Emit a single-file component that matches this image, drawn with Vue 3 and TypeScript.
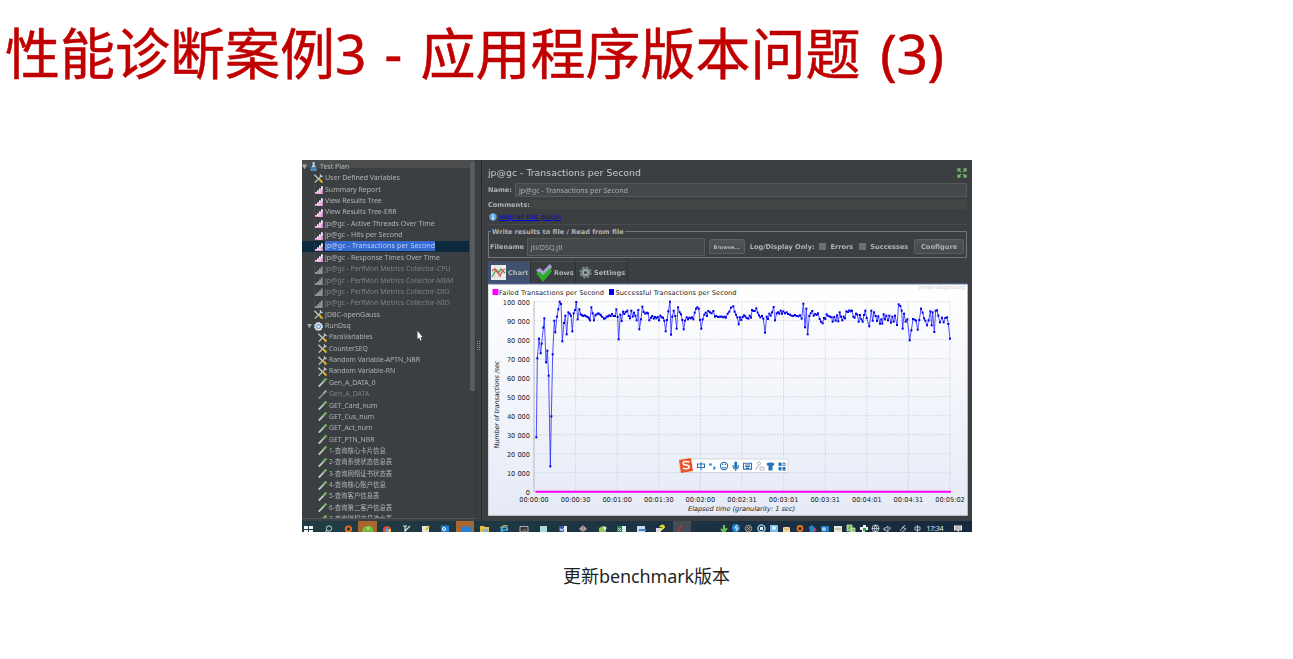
<script setup lang="ts">
interface TreeNode { label: string; level: number; icon: string; open?: boolean; dim?: boolean; selected?: boolean; cjk?: boolean }
const node = (label: string, level: number, icon: string, extra: Partial<TreeNode> = {}): TreeNode => ({ label, level, icon, ...extra })

const tree: TreeNode[] = [
  node('Test Plan', 0, 'flask', { open: true }),
  node('User Defined Variables', 1, 'tools'),
  ...['Summary Report', 'View Results Tree', 'View Results Tree-ERR', 'jp@gc - Active Threads Over Time', 'jp@gc - Hits per Second'].map(t => node(t, 1, 'graph')),
  node('jp@gc - Transactions per Second', 1, 'graph', { selected: true }),
  node('jp@gc - Response Times Over Time', 1, 'graph'),
  ...['CPU', 'MEM', 'DIO', 'NIO'].map(t => node('jp@gc - PerfMon Metrics Collector-' + t, 1, 'graph', { dim: true })),
  node('JDBC-openGauss', 1, 'tools'),
  node('RunDsq', 1, 'gear', { open: true }),
  ...['ParaVariables', 'CounterSEQ', 'Random Variable-APTN_NBR', 'Random Variable-RN'].map(t => node(t, 2, 'tools')),
  node('Gen_A_DATA_0', 2, 'pipette'),
  node('Gen_A_DATA', 2, 'pipette', { dim: true }),
  ...['GET_Card_num', 'GET_Cus_num', 'GET_Act_num', 'GET_PTN_NBR'].map(t => node(t, 2, 'pipette')),
  ...['1-查询核心卡片信息', '2-查询系统状态信息表', '3-查询网络证书状态表', '4-查询核心账户信息', '5-查询客户信息表', '6-查询第二客户信息表', '7-查询授权交易流水表'].map(t => node(t, 2, 'pipette', { cjk: true })),
]

// Samples as "x,y" pairs, three units to the pixel
const early = '169,472 172,235 177,176 182,220 185,191 190,143 193,115 198,247 202,212 206,287 211,559 214,409 218,223 223,122 226,157 231,110 235,88 239,65 243,72 247,184 252,129 256,107 260,163 265,97 269,101 273,107 277,154 281,100 285,90 289,66 293,118 298,88 302,103 306,106 310,108 314,106 319,109 323,111 327,115 330,121 334,82 338,100 342,121 346,106 350,103 355,100 359,103 363,106 367,111 372,116 376,115 380,110 384,109 388,106 392,108 396,102 401,108 405,108 409,88 413,111 416,178 421,104 425,123 429,95 433,102 437,96 442,92 446,108 450,115 454,92 458,110 462,98 466,107 470,121 475,90 478,148 483,118 487,80 491,96 496,101 500,98 504,100 508,121 513,113 517,108 521,116 525,111 529,115 533,111 537,121 541,107 545,112 549,113 553,122 557,154 561,120 565,94 570,65 573,164 577,110 581,92 586,108 590,146 594,82 599,97 603,103 607,120 611,148 615,122 620,112 624,118 628,113 632,115 636,112 640,118 644,98 648,86 652,82 656,86 660,120 664,146 668,118 673,104 677,98 681,108 685,93 690,97 695,100 700,93 705,110 709,108 714,111'
const late = '0,110 5,110 10,112 14,110 18,113 23,101 28,95 33,83 40,79 44,95 48,104 52,112 56,133 60,112 64,120 68,111 72,106 76,109 80,114 85,116 89,107 93,113 96,90 100,93 104,93 109,85 113,98 117,106 121,112 126,108 130,116 135,158 140,110 144,117 148,101 152,107 156,97 161,81 165,121 170,100 174,97 178,101 182,92 186,101 190,94 195,100 200,97 204,102 210,104 215,107 220,108 225,105 230,108 235,109 240,106 245,116 250,71 255,142 259,86 263,163 268,108 272,100 277,93 281,107 286,102 290,105 294,100 299,117 303,125 308,130 312,114 316,117 320,103 325,108 330,110 335,112 338,125 343,111 347,122 351,106 355,124 359,97 363,110 367,121 371,110 375,115 379,94 384,96 388,91 392,94 396,92 400,110 404,113 408,101 412,104 416,125 420,105 424,118 428,125 432,105 436,92 440,114 448,139 454,92 458,122 462,97 467,108 471,123 475,109 480,131 484,118 487,131 491,103 495,118 499,107 504,121 508,107 513,128 517,110 521,125 525,107 531,135 536,73 541,78 545,92 548,146 552,101 557,125 562,118 569,181 574,151 579,117 584,119 588,122 593,149 598,120 603,86 608,98 612,115 616,122 621,136 626,121 631,94 635,136 638,97 643,156 647,92 651,91 655,107 660,127 666,113 671,127 676,114 681,112 685,132 690,176'
const parse = (s: string, dx: number) => s.split(' ').map(p => p.split(',').map(Number)).map(([x, y]) => [(x + dx) / 3 - 8, y / 3 - 4])
const samples = [...parse(early, 0), ...parse(late, 720)]
const line = samples.map(p => p.map(n => n.toFixed(2)).join(',')).join(' ')

const yTicks = Array.from({ length: 11 }, (_, i) => ({ y: 207.7 - i * 19, label: i === 0 ? '0' : `${i * 10} 000` }))
const xTicks = ['00:00:00', '00:00:30', '00:01:00', '00:01:30', '00:02:00', '00:02:31', '00:03:01', '00:03:31', '00:04:01', '00:04:31', '00:05:02'].map((label, i) => ({ x: 46 + i * 41.6, label }))
</script>

<template>
  <main class="slide">
    <h1 class="title"><span>性能诊断案例</span><span class="lat a">3 - </span><span>应用程序版本问题</span><span class="lat b"> (3)</span></h1>
    <section class="shot">
      <div class="workspace">
        <aside class="tree">
          <div v-for="n in tree" :key="n.label" class="row" :class="['l' + n.level, { dim: n.dim, selected: n.selected, cjk: n.cjk }]">
            <i class="arrow" :class="{ open: n.open }"></i>
            <svg class="ico" viewBox="0 0 9 9">
              <g v-if="n.icon === 'flask'"><path d="M3.6 0h2v3l2 4.500q0 1.300-1.200 1.300H2.700q-1.300 0-1.100-1.300l2-4.500z" fill="#b8d4e8" /><path d="M2.500 5h4l1.100 2.600q0 1.200-1.200 1.200H2.700q-1.300 0-1.100-1.200z" fill="#3d86c6" /></g>
              <g v-else-if="n.icon === 'tools'" fill="none"><path d="M.8 8.600L7.500 1.600" stroke="#c4c8ca" stroke-width="1.3" /><path d="M.4.8l3.800 3.700M6.300.4l.4 1.900 2 .2" stroke="#c4c8ca" stroke-width="1.3" /><path d="M4.900 4.800l3.500 3.800" stroke="#e3b320" stroke-width="2" /></g>
              <g v-else-if="n.icon === 'graph'"><path d="M.2 0v9" stroke="#6b6e70" stroke-width=".4" /><path v-if="n.dim" d="M1 9V7h2V5.500h2v-2h2V1.500h1.700V9z" fill="#8f9192" /><g v-else><path d="M1 9V7h2V5.500h2v-2h2V1.500h1.700V9z" fill="#ecb9e6" /><path d="M3 5.500h1.200V8H3zM5 3.500h1.200V6H5zM7 1.500h1.700v3H7z" fill="#e2ecff" /><path d="M1 8.200h4V9H1zM7.300 5.500h1.400V9H7.300z" fill="#e08acf" /></g></g>
              <g v-else-if="n.icon === 'gear'"><circle cx="4.5" cy="4.5" r="3.7" fill="#d7e5f0" stroke="#d7e5f0" stroke-width="1.4" stroke-dasharray="1.5 .9" /><circle cx="4.5" cy="4.5" r="2" fill="none" stroke="#5285b5" stroke-width="1" /></g>
              <g v-else><path d="M.8 8.600L6.500 2.500" :stroke="n.dim ? '#888' : '#c7cbc9'" stroke-width="1.8" /><path d="M5.200 3.700L8.400.5" :stroke="n.dim ? '#999' : '#70b75d'" stroke-width="2.2" /></g>
            </svg>
            <span>{{ n.label }}</span>
          </div>
          <i class="thumb"></i>
        </aside>
        <div class="split"><i></i></div>
        <div class="panel">
          <header class="head"><span>jp@gc - Transactions per Second</span>
            <svg width="10" height="10" viewBox="0 0 10 10" stroke="#6fbf62" stroke-width="1.3" fill="none"><path d="M1 3.500V1h2.500M1 1l3 3M6.500 1H9v2.500M9 1L6 4M1 6.500V9h2.500M1 9l3-3M6.500 9H9V6.500M9 9L6 6" /></svg>
          </header>
          <div class="name"><b>Name:</b><div class="input">jp@gc - Transactions per Second</div></div>
          <div class="comments"><b>Comments:</b><div></div></div>
          <div class="help"><svg width="8" height="8" viewBox="0 0 8 8"><circle cx="4" cy="4" r="3.7" fill="#65a3da" /><path d="M4 1.500v1M4 3.400v3" stroke="#fff" stroke-width="1.3" /></svg><span>Help on this plugin</span></div>
          <div class="file">
            <b class="legend">Write results to file / Read from file</b>
            <b class="fn">Filename</b><div class="input">jtl/DSQ.jtl</div><div class="btn browse">Browse...</div>
            <b class="log">Log/Display Only:</b><i></i><b class="err">Errors</b><i></i><b class="suc">Successes</b><div class="btn conf">Configure</div>
          </div>
          <nav class="tabs">
            <div class="tab active"><svg width="15" height="15" viewBox="0 0 15 15"><path d="M0 0h15v15H0z" fill="#eee" /><path d="M0 4h15M0 8h15M0 12h15M4 0v15M9 0v15" stroke="#ccc" stroke-width=".5" /><path d="M1 12l4-7 3 2 2-3 4 4" stroke="#4ba34a" fill="none" stroke-width="1.3" /><path d="M1 6l3-2 5 7 3-6 2-1" stroke="#dc5048" fill="none" stroke-width="1.3" /></svg><b>Chart</b></div>
            <div class="tab rows"><svg width="18" height="18" viewBox="0 0 18 18"><path d="M1 6l4-2 3 3 7-7 2 3-9 12z" fill="#a7a4da" /><path d="M1 9l4-1 3 3 7-7 2 3-9 11z" fill="#2cae27" /></svg><b>Rows</b></div>
            <div class="tab set"><svg width="13" height="13" viewBox="0 0 13 13"><circle cx="6.5" cy="6.5" r="5" fill="#728080" stroke="#728080" stroke-width="2.4" stroke-dasharray="2 1.93" /><circle cx="6.5" cy="6.5" r="3" fill="#a2b0b0" /><circle cx="6.5" cy="6.5" r="1.6" fill="#3c4244" /></svg><b>Settings</b></div>
          </nav>
          <svg class="chart" width="480" height="232" viewBox="0 0 480 232">
            <defs><linearGradient id="sky" x1="0" y1="0" x2="0" y2="1"><stop offset="0" stop-color="#fff" /><stop offset="1" stop-color="#e5eaf6" /></linearGradient></defs>
            <rect width="479" height="232" fill="url(#sky)" />
            <path d="M0 232V.5h479.500v231H0" fill="none" stroke="#b9bdc0" />
            <g stroke="#c3c6ce" stroke-width=".7" stroke-dasharray="1.5 1.5">
              <path v-for="t in yTicks" :key="t.label" :d="`M46 ${t.y}H462`" />
              <path v-for="t in xTicks" :key="t.label" :d="`M${t.x} 17.7V207.7`" />
            </g>
            <path d="M46 17.500V208" stroke="#aaa" stroke-width=".6" />
            <path d="M4.500 5h6v6h-6z" fill="#f0f" /><path d="M121 5h5v6h-5z" fill="#00f" />
            <g class="ct">
              <text x="11" y="10.5" textLength="105">Failed Transactions per Second</text>
              <text x="127.5" y="10.5" textLength="121">Successful Transactions per Second</text>
              <text v-for="t in yTicks" :key="t.label" x="42" :y="t.y + 2.8" text-anchor="end">{{ t.label }}</text>
              <text v-for="t in xTicks" :key="t.label" :x="t.x" y="217.8" text-anchor="middle">{{ t.label }}</text>
              <text class="it" x="200" y="226.5" textLength="107">Elapsed time (granularity: 1 sec)</text>
              <text class="it" transform="translate(10.5 164.5) rotate(-90)" textLength="88">Number of transactions /sec</text>
              <text class="wm" x="430" y="5" textLength="47">jmeter-plugins.org</text>
            </g>
            <polyline :points="line" fill="none" stroke="#3030ff" stroke-width=".85" />
            <rect v-for="(p, i) in samples" :key="i" :x="p[0] - 1" :y="p[1] - 1" width="2" height="2" fill="#0000e8" />
            <path d="M47.500 207.700H463" stroke="#f0f" stroke-width="2" />
            <g>
              <rect x="192" y="175" width="108" height="13.5" fill="#fff" stroke="#c8ccd5" stroke-width=".7" />
              <path d="M191 176l12-2 2 13-12 2z" fill="#ed5528" />
              <path d="M201.500 178q-6-1.500-6.500 1 0 1.800 3 2t3.200 2.200q-.8 2.600-6.200 1" stroke="#fff" stroke-width="1.5" fill="none" />
              <g stroke="#2673b8" fill="none" stroke-width="1.1">
                <path d="M209.500 180h7v3.500h-7zM213 178v8.500" /><circle cx="222.5" cy="180.5" r=".8" /><path d="M226.500 182.500v1.500l-1 1.500" stroke-width="1.5" />
                <circle cx="236" cy="182" r="3.600" /><path d="M234 180.500h1.300M236.700 180.500h1.300M234 183q2 2 4 0" stroke-width=".9" />
                <path d="M245 181q0 4 2.700 4t2.700-4M247.700 185v2" /><path d="M247.700 179v4" stroke-width="2.8" stroke-linecap="round" />
                <path d="M255.500 179.300h8v5.800h-8zM257 181h5M257 182.500h5M258 184h3" />
              </g>
              <g stroke="#b5b9c3" fill="none"><circle cx="271" cy="179.5" r="1.5" /><path d="M268 186q0-4 3-4M272 183h4v3h-4z" /></g>
              <path d="M278.500 179.500l2.500-1h3l2.500 1-1 2.500-1-.5v5h-4v-5l-1 .5zM290.500 178.500h3v3.500h-3zM290.500 183h3v3.500h-3zM294.500 183h3v3.500h-3z" fill="#2673b8" /><circle cx="296" cy="180.3" r="1.4" fill="none" stroke="#2673b8" />
            </g>
          </svg>
        </div>
      </div>
      <svg class="taskbar" width="670" height="11" viewBox="0 0 670 11">
        <defs><linearGradient id="bar"><stop offset="0" stop-color="#203c43" /><stop offset=".6" stop-color="#1c3244" /><stop offset="1" stop-color="#17293c" /></linearGradient></defs>
        <path d="M0 0h670v11H0z" fill="url(#bar)" />
        <path d="M56 0h19v11H56zM154 0h18v11h-18z" fill="#a9662f" /><path d="M371 0h18v11h-18z" fill="#454c55" />
        <path d="M2 5h4v3H2zM7 5h4v3H7zM2 9h4v2H2zM7 9h4v2H7z" fill="#f4f8f8" />
        <g fill="none" stroke="#c8d4d5" stroke-width="1"><circle cx="27" cy="7.5" r="2.7" /><path d="M25 9.500L23 11" /></g>
        <circle cx="46.5" cy="8" r="2.7" fill="none" stroke="#ee701f" stroke-width="1.8" />
        <path d="M61 7q2-3 4-1 3-3 6 1v4H60z" fill="#73bb42" /><circle cx="66" cy="7" r="1.5" fill="#b3df6b" />
        <path d="M81 9q0-4 4-4t4 4v2h-8z" fill="#d94a38" /><path d="M85 8h4v3h-4z" fill="#eabd35" /><circle cx="85" cy="9" r="1.8" fill="#519ef0" />
        <path d="M101 5h4M103 5v6M103 10l5-5" stroke="#dae2d7" stroke-width="1.2" />
        <path d="M120 5h7v6h-7z" fill="#dceadf" /><path d="M124 9l3-4" stroke="#eeb72e" stroke-width="2" />
        <path d="M139 4.500h8V11h-8z" fill="#2682cd" /><circle cx="142" cy="8" r="1.5" fill="none" stroke="#fff" />
        <path d="M159 7l3-2 3 1 3-1 2 2-1 4h-9z" fill="#277ed6" />
        <path d="M178 5h4l1 1h4v5h-9z" fill="#e7bd4b" /><path d="M181 8h5v3h-5z" fill="#72bade" />
        <path d="M198.500 9h7q0-3-3-3t-3 3 2 2" fill="none" stroke="#3db0ee" stroke-width="1.5" /><path d="M198 7q4-4 8-2" fill="none" stroke="#e5c743" />
        <path d="M218 5.500h8V11h-8z" fill="#30383d" stroke="#ccc" stroke-width=".8" /><path d="M221 9h3" stroke="#de6460" />
        <path d="M238 5h7v6h-7z" fill="#a9dcd5" /><path d="M257 5h8v6h-8z" fill="#e4eaf6" /><path d="M257 5h5v6h-5z" fill="#305ea5" /><path d="M258 7l1 3 .8-2 .8 2 1-3" fill="none" stroke="#fff" stroke-width=".6" />
        <path d="M281 4l4 4-4 3-4-3z" fill="#a9a9b6" /><path d="M281 5v5" stroke="#d74f45" stroke-width="1.2" />
        <path d="M297 7l4-2 3 1v5h-7z" fill="#8fcd4e" /><circle cx="303" cy="7" r="1.5" fill="#eee" />
        <path d="M315 5h9v6h-9z" fill="#d9eee2" /><path d="M315 5h5v6h-5z" fill="#278350" /><path d="M316 7l3 3m0-3l-3 3" stroke="#fff" stroke-width=".7" />
        <path d="M335 5h8v6h-8z" fill="#c8daf1" /><path d="M337 9h7" stroke="#4187cb" stroke-width="2" />
        <path d="M354 7h5v4h-5z" fill="#d5dde2" /><path d="M358 6q3-3 4 0-2 2-3 3" fill="none" stroke="#f4de31" stroke-width="2" />
        <path d="M376 10l4-6" stroke="#c42f38" stroke-width="1.4" />
        <path d="M422 4v5M419 8l3 3 3-4" stroke="#73c44e" stroke-width="2" fill="none" /><circle cx="434" cy="7" r="4" fill="#2786d0" /><path d="M435 4l-2 3h3l-2 3" stroke="#fff" fill="none" />
        <circle cx="446.5" cy="7.5" r="3.2" fill="#444" stroke="#999" /><path d="M445 6l3 3m0-3l-3 3" stroke="#999" /><circle cx="459.5" cy="7.5" r="3.5" fill="none" stroke="#8bc5e7" stroke-width="1.6" /><path d="M458 6h3v3h-3z" fill="#eee" />
        <path d="M468 4h8v7h-8z" fill="#79bfe8" /><circle cx="472" cy="7" r="2" fill="#e2f4ff" /><path d="M481 6h7v5h-7z" fill="#f3dfa6" /><path d="M481 6l3.500 3L488 6" fill="none" stroke="#d78d41" />
        <circle cx="498" cy="7.5" r="2.5" fill="#38210e" stroke="#df7226" stroke-width="1.8" /><path d="M507 6l3-2 4 4-2 3h-4z" fill="#2883d1" /><circle cx="513" cy="9" r="1.5" fill="#d4393b" />
        <path d="M519 5h8v6h-8z" fill="#2481cb" /><circle cx="522" cy="8" r="1.3" fill="none" stroke="#fff" /><path d="M532 5h8v6h-8z" fill="#e9e8dd" /><path d="M533 8h6" stroke="#a99f77" />
        <path d="M545 4h5v6h-5zM549 7h4v4h-4z" fill="#7dbc55" stroke="#eef6df" stroke-width=".7" /><path d="M558 6h3V4h3v2h2v3h-3v2h-3V9h-2z" fill="#e9f4ea" /><path d="M561 7h3v3h-3z" fill="#32a65d" />
        <g fill="none" stroke="#d7e1e6" stroke-width=".8"><circle cx="573.5" cy="7.5" r="3.5" /><path d="M570 7.500h7M573.500 4q-3 3.500 0 7M573.500 4q3 3.500 0 7M582 7h2l2-2v6l-2-2h-2zM588 6v3" /><path d="M598 10l5-6M600 6l4 2-4 3" /><path d="M613 6h5v3h-5zM615.500 4v7" /></g>
        <text x="624.5" y="10.2" textLength="17">17:34</text>
        <path d="M652 4.500h8v5h-3V11l-2-1.500h-3z" fill="#eee" /><path d="M653 6h6M653 8h6" stroke="#46515b" stroke-width=".6" />
      </svg>
      <svg class="cursor" width="6" height="10" viewBox="0 0 6 10"><path d="M.5 0v8l1.700-1.500L3.300 9.500l1.200-.5-1.100-2.700H5.700z" fill="#fff" /></svg>
    </section>
    <p class="caption">更新<span>benchmark</span>版本</p>
  </main>
</template>

<style scoped>
.slide { width: 1293px; height: 659px; background: #fff; overflow: hidden; display: flex; flex-direction: column; align-items: center; font-family: "DejaVu Sans", "Noto Sans CJK SC", sans-serif; }
.title { align-self: flex-start; margin: 8px 0 0 5px; height: 84px; font: 400 55px/84px "Noto Sans CJK SC", sans-serif; color: #c00000; white-space: pre; -webkit-text-stroke: .5px #c00000; }
.lat { font-family: "Noto Sans", sans-serif; }
.lat.a { letter-spacing: 1.9px; }
.lat.b { word-spacing: 6px; letter-spacing: -.4px; }
.shot { position: relative; align-self: flex-start; width: 670px; height: 372px; margin: 68px 0 0 302px; background: #3c3f41; overflow: hidden; font-size: 6.6px; color: #b0b3b4; }
.workspace { display: flex; height: 361px; overflow: hidden; filter: blur(.25px); }
.tree { position: relative; flex: none; width: 173px; height: 359px; overflow: hidden; padding-top: 1.3px; box-sizing: border-box; background: linear-gradient(#4b4d4f 0 8px, transparent 8px); border-bottom: 1px solid #55595b; }
.row { display: flex; align-items: center; height: 11.37px; gap: 2px; white-space: nowrap; font-family: "Noto Sans", "Noto Sans CJK SC", sans-serif; font-size: 7px; box-sizing: border-box; }
.row span { line-height: 10px; }
.l1 { padding-left: 5px; }
.l2 { padding-left: 9px; font-size: 6.8px; }
.cjk { font-size: 6.4px; }
.dim { color: #7e8182; font-size: 6.9px; }
.selected { background: #0d293e; color: #bdd0f5; width: 167px; letter-spacing: .13px; }
.selected span { background: #3569cf; }
.arrow { width: 5px; height: 5px; flex: none; }
.arrow.open { background: #a6a9aa; clip-path: polygon(0 0, 100% 0, 50% 100%); }
.ico { width: 9px; height: 9px; flex: none; }
.thumb { position: absolute; right: 0; top: 2px; width: 5px; height: 229px; background: #595c5e; }
.split { flex: none; width: 7px; border-right: 1px solid #25282a; box-sizing: border-box; border-left: 1px solid #33373a; display: flex; align-items: center; justify-content: center; }
.split i { width: 3px; height: 9px; border: dotted #8d9091; border-width: 0 1px; box-sizing: border-box; margin-top: 10px; }
.panel { width: 490px; padding: 0 5px 0 6px; box-sizing: border-box; }
.head { height: 23px; padding-top: 2px; box-sizing: border-box; display: flex; align-items: center; justify-content: space-between; font-size: 9.4px; color: #c5c8c9; }
.name { display: flex; align-items: center; height: 14px; }
.name b { width: 27px; }
.input { flex: 1; height: 100%; box-sizing: border-box; border: 1px solid #56595a; background: #45484a; padding-left: 3px; display: flex; align-items: center; color: #aaa; font-family: "Noto Sans", sans-serif; font-size: 7.2px; }
.comments { display: flex; align-items: center; height: 9px; margin-top: 3px; }
.comments b { width: 42px; }
.comments div { flex: 1; height: 9px; background: #434647; }
.help { height: 16px; display: flex; align-items: center; gap: 2px; border-bottom: 1px solid #484b4d; color: #0000e8; box-sizing: border-box; padding-left: 1px; }
.help span { text-decoration: underline; }
.file { position: relative; margin-top: 6px; height: 27px; border: 1px solid #75787a; box-sizing: border-box; display: flex; align-items: center; padding: 4px 2px 0 1px; white-space: nowrap; }
.legend { position: absolute; left: 2px; top: -4px; line-height: 8px; background: #3c3f41; padding: 0 1px; }
.fn { width: 37px; }
.file .input { flex: none; width: 178px; height: 18px; }
.btn { box-sizing: border-box; border-radius: 2px; border: 1px solid #5c6062; background: linear-gradient(#515557, #45494b); display: flex; align-items: center; justify-content: center; height: 15px; font-weight: 700; }
.browse { width: 36px; margin: 0 5px 0 4px; font-size: 5px; }
.log { width: 70px; }
.file i { width: 7px; height: 7px; background: #6b6e6f; margin-right: 4px; }
.err { width: 29px; }
.suc { width: 44px; }
.conf { width: 50px; }
.tabs { display: flex; height: 24px; margin-top: 2px; border-bottom: 1px solid #4a5f91; padding-top: 1px; box-sizing: border-box; }
.tab { display: flex; align-items: center; box-sizing: border-box; border-right: 1px solid #2f3234; border-top: 1px solid #4c4f51; }
.tab.active { width: 43px; background: #40506f; padding-left: 3px; gap: 2px; }
.tab.rows { width: 45px; padding-left: 4px; gap: 1px; }
.tab.set { width: 52px; padding-left: 3px; gap: 2px; }
.chart { display: block; }
.ct { font: 6.6px "DejaVu Sans", sans-serif; fill: #222; }
.it { font-style: italic; }
.wm { font-size: 5.5px; fill: #cfd2dc; }
.taskbar { display: block; }
.taskbar text { font: 7px "Noto Sans", sans-serif; fill: #e6eaee; }
.cursor { position: absolute; left: 115px; top: 171px; }
.caption { margin: 26.5px 0 0; height: 32px; font: 18px/32px "Noto Sans CJK SC", sans-serif; color: #1d1f24; }
.caption span { font-family: "Noto Sans", sans-serif; letter-spacing: -.1px; }
</style>
